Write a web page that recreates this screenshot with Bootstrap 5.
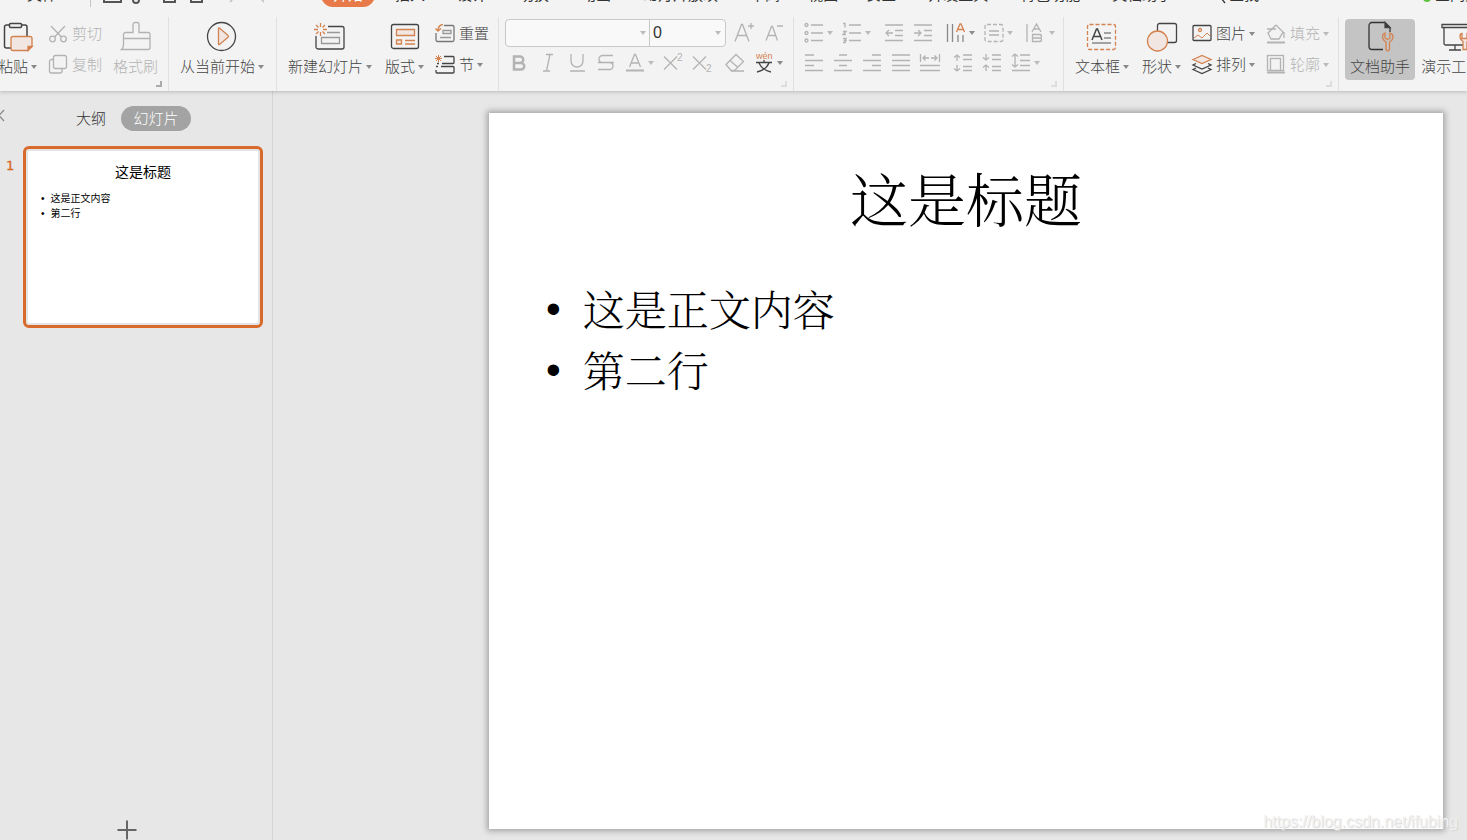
<!DOCTYPE html>
<html lang="zh-CN">
<head>
<meta charset="utf-8">
<meta name="viewport" content="width=device-width, initial-scale=1">
<title>演示文稿</title>
<link rel="stylesheet" href="https://cdn.jsdelivr.net/npm/bootstrap@5.3.0/dist/css/bootstrap.min.css">
<style>
  :root { --ink:#444; --dim:#b3b3b3; --accent:#d4824f; --tint:#f1e6e1; --ui:"Liberation Sans","Noto Sans CJK SC",sans-serif; }
  body { background:#e7e7e7; color:var(--ink); font:300 15px/20px var(--ui); overflow:hidden; }
  svg { fill:none; stroke:currentColor; stroke-width:1.3; flex:none; display:block; overflow:visible; }
  svg text { fill:currentColor; stroke:none; font-family:"Liberation Sans",sans-serif; }
  svg .or { stroke:var(--accent); }
  svg .tint { fill:var(--tint); }
  svg text.or { fill:var(--accent); stroke:none; }
  .top { background:#f3f3f3; box-shadow:0 1px 4px rgba(0,0,0,.2); position:relative; z-index:2; }

  .strip { height:7px; align-items:flex-end; overflow:hidden; }
  .strip .btn { --bs-btn-color:#333; --bs-btn-border-width:0; border:0; padding:0; font-size:15px; line-height:24px; flex:none; white-space:nowrap; }
  .strip .file { margin-left:27px; padding-right:33px; border-right:1px solid #c4c4c4; border-radius:0; }
  .quick { width:220px; margin-left:11px; flex:none; }
  .strip .pick { background:#e87a49; color:#fff; border-radius:12px; padding:0 12px; margin:0 -12px; }
  .tabs { gap:32px; margin-left:11px; flex:none; }
  .tabs .late { margin-left:-4px; }
  .sync { margin-left:auto; padding-right:0; width:44px; }

  .ribbon { height:84px; padding-top:10px; margin-left:-2px; overflow:hidden; }
  .grp { height:74px; border-right:1px solid #e0e0e0; position:relative; flex:none; gap:11px; padding:0 9px 0 11px; }
  .grp.show-grp { width:108px; }
  .grp.wide { gap:13px; }
  .grp.wide .pair { margin-left:-2px; }
  .grp.last { border:0; padding:0 6px; gap:1px; }
  .grp .btn { --bs-btn-disabled-opacity:1; --bs-btn-color:var(--ink); border:0; padding:0; font-size:15px; font-weight:300; line-height:20px; white-space:nowrap; border-radius:4px; }
  .grp .btn:disabled { color:var(--dim); }
  .grp.first { padding-left:0; padding-right:0; gap:11px; width:171px; }
  .big { display:flex; flex-direction:column; align-items:center; margin-top:2px; height:61px; }
  .grp .big { padding-top:2px; }
  .big svg { margin-bottom:4px; }
  .grp.last .btn { padding-left:5px; padding-right:5px; }
  .grp.last .on { background:#c4c4c4; }
  .pair { display:flex; flex-direction:column; align-items:flex-start; gap:11px; padding-top:7px; }
  .pair .btn, .tool .btn { display:flex; align-items:center; }
  .pair svg { margin-right:4px; }
  .drop::after { content:""; display:inline-block; border:3px solid transparent; border-top:4px solid #8a8a8a; border-bottom:0; margin-left:3px; vertical-align:3px; }
  .drop:disabled::after, :disabled .drop::after { border-top-color:#bbb; }
  .corner { position:absolute; right:6px; bottom:4px; width:6px; height:6px; border:solid #ddd; border-width:0 2px 2px 0; }
  .corner.dark { border-color:#aaa; }
  .tool { display:flex; gap:9px; align-items:center; height:20px; }
  .tool.high { height:28px; }
  .stack { padding-top:6px; display:flex; flex-direction:column; gap:10px; }
  .field { border:1px solid #c8c8c8; border-radius:4px; background:#f9f9f9; height:28px; display:flex; align-items:center; width:221px; overflow:hidden; }
  .field input { border:0; background:transparent; font-size:16px; color:#333; padding:0 3px; outline:0; height:26px; min-width:0; }
  .field .fam { width:131px; }
  .field .size { width:63px; border-left:1px solid #c8c8c8; }
  .field .drop { width:12px; }
  .grp.font-grp { width:295px; padding:0 6px; }
  .font-grp .stack { padding-top:2px; gap:6px; }
  .font-grp .tool.low { padding-left:4px; }
  .grp.para { width:270px; padding:0 10px; }

  .pane { width:273px; border-right:1px solid #d5d5d5; flex:none; padding-top:14px; position:relative; }
  .pane-tabs { height:26px; padding-left:76px; margin-bottom:15px; gap:15px; align-items:center; }
  .pane .btn { border:0; padding:0; font-size:15px; font-weight:300; line-height:25px; color:#333; }
  .pane .now { background:#a3a3a3; color:#fff; border-radius:13px; width:70px; }
  .pane .hide-pane { position:absolute; left:-2px; top:12px; }
  .no { width:23px; padding:10px 0 0 6px; color:#d8681f; font:400 13px/20px "DejaVu Sans",sans-serif; -webkit-text-stroke:.3px; }
  .thumb { width:240px; border:3px solid #d86b2b; border-radius:6px; background:#fff; box-shadow:inset 0 0 0 2px #e4e4e4; aspect-ratio:240/182; color:#000; font-weight:400; }
  .thumb h2 { font-size:14px; line-height:20px; margin:13px 0 9px; text-align:center; font-weight:400; }
  .thumb ul { list-style:none; margin:0; padding:0 0 0 15px; font-size:10px; line-height:15px; }
  .thumb li { display:flex; gap:6px; }
  .pane .plus { margin:auto 0 0 117px; align-self:flex-start; }
  .stage { flex:1; min-width:0; padding:22px 24px 10px 216px; }
  .slide { background:#fff; box-shadow:0 0 6px 2px rgba(0,0,0,.3); aspect-ratio:4/3; color:#000; font-family:"Noto Serif CJK SC","Noto Sans CJK SC",serif; font-weight:300; }
  .slide h1 { font-size:58px; line-height:70px; font-weight:300; margin:0; padding-top:49px; text-align:center; }
  .slide ul { list-style:none; margin:46px 0 0; padding:0 0 0 57px; font-size:42px; line-height:61px; }
  .slide li { display:flex; gap:22px; }
  .slide li::before, .thumb li::before { content:"•"; font-family:"Liberation Sans",sans-serif; }
  .stamp { position:absolute; right:9px; bottom:8px; font-size:16px; font-weight:400; color:#f1f1f1; text-shadow:1px 1px 1px #d6d6d6; text-decoration:none; z-index:3; }
</style>
</head>
<body class="vh-100 d-flex flex-column position-relative">
<header class="top">
  <nav class="strip d-flex" aria-label="菜单">
    <button class="btn file">文件</button>
    <svg class="quick" width="220" height="24" viewBox="0 0 220 24">
      <path d="M2 8v11h17V8M31 17a2 2 0 0 0 6 0M62 8v11h11V8M89 8v11h11V8" stroke="#555" stroke-width="2"/>
      <path d="M128 19l4-4M158 15l4 4" stroke="#bbb"/>
    </svg>
    <div class="tabs d-flex">
      <button class="btn pick">开始</button>
      <button class="btn">插入</button><button class="btn">设计</button><button class="btn">切换</button><button class="btn">动画</button><button class="btn">幻灯片放映</button><button class="btn">审阅</button><button class="btn late">视图</button><button class="btn late">安全</button><button class="btn">开发工具</button><button class="btn">特色功能</button><button class="btn">文档助手</button>
      <button class="btn d-flex align-items-center ms-2"><svg width="17" height="24" viewBox="0 0 17 24"><circle cx="6" cy="11" r="5"/><path d="M9 15l4 5"/></svg>查找</button>
    </div>
    <button class="btn sync d-flex"><svg width="12" height="24" viewBox="0 0 12 24"><circle cx="4" cy="15" r="4" fill="#5cc13c" stroke="none"/></svg>全同步</button>
  </nav>

  <div class="ribbon d-flex">
    <section class="grp first d-flex">
      <button class="btn big"><svg width="32" height="32" viewBox="0 0 32 32"><path d="M8 4H4.500a2 2 0 0 0-2 2v19a2 2 0 0 0 2 2H9M19 4h4a2 2 0 0 1 2 2v9" stroke-width="1.500"/><rect x="7.500" y="2.500" width="12" height="4" rx="1" stroke-width="1.500"/><path class="or tint" d="M11 15.500h17a2 2 0 0 1 2 2v8l-4 4H11a2 2 0 0 1-2-2v-10a2 2 0 0 1 2-2z"/><path d="M30 25.500l-4 4v-4z" class="or" fill="#d4824f"/></svg><span class="drop">粘贴</span></button>
      <div class="pair">
        <button class="btn" disabled><svg width="20" height="20" viewBox="0 0 20 20"><circle cx="4.500" cy="15" r="2.800"/><circle cx="15.500" cy="15" r="2.800"/><path d="M3 2l10.500 11M17 2L6.500 13"/></svg>剪切</button>
        <button class="btn" disabled><svg width="20" height="20" viewBox="0 0 20 20"><rect x="5.500" y=".5" width="13" height="13" rx="2"/><path d="M5 4.500H3.500a2 2 0 0 0-2 2V16a2 2 0 0 0 2 2H12a2 2 0 0 0 2-2v-2"/></svg>复制</button>
      </div>
      <button class="btn big" disabled><svg width="32" height="32" viewBox="0 0 32 32"><path d="M13 11.500V3.500a2 2 0 0 1 2-2h2a2 2 0 0 1 2 2v8h9a2 2 0 0 1 2 2v13a2 2 0 0 1-2 2H1.500Q3.500 27 3.500 24V13.500a2 2 0 0 1 2-2zM3.500 17.500H30"/></svg>格式刷</button>
      <i class="corner dark"></i>
    </section>

    <section class="grp show-grp d-flex">
      <button class="btn big"><svg width="32" height="32" viewBox="0 0 32 32"><circle cx="15.500" cy="15.500" r="14"/><path class="or tint" d="M12.500 7.500V23q0 1 1 .5l8.500-7.300q1-1 0-1.800L13.500 7q-1-.5-1 .5z"/></svg><span class="drop">从当前开始</span></button>
    </section>

    <section class="grp wide d-flex">
      <button class="btn big"><svg width="32" height="32" viewBox="0 0 32 32"><path d="M14 5.500h14a2 2 0 0 1 2 2V26a2 2 0 0 1-2 2H4a2 2 0 0 1-2-2V15"/><path d="M13 11.500h13M7.500 16.500h18v6h-18z" stroke="#999"/><path class="or" d="M6.500 2v4M6.500 11v4M0 8.500h4M9 8.500h4M2 4l2.500 2.500M8.500 10.500L11 13M11 4L8.500 6.500M4.500 10.500L2 13"/></svg><span class="drop">新建幻灯片</span></button>
      <button class="btn big"><svg width="32" height="32" viewBox="0 0 32 32"><rect x="2.500" y="3.500" width="27" height="24" rx="2"/><path class="or tint" d="M7.500 8.500h18v6h-18zM7.500 19h5v4h-5z"/><path class="or" d="M16 19.500h10M16 23h10"/></svg><span class="drop">版式</span></button>
      <div class="pair">
        <button class="btn"><svg width="20" height="20" viewBox="0 0 20 20"><path d="M9 1.500h8.500a1.500 1.500 0 0 1 1.500 1.500v13a1.500 1.500 0 0 1-1.500 1.500h-15A1.500 1.500 0 0 1 1 16V9" stroke="#777"/><path d="M8 6.500h8v3H8zM5 13.500h11" stroke="#999"/><path class="or" d="M8 .5Q3 1 3 7M.5 4.500L3 7l3-2.500"/></svg>重置</button>
        <button class="btn"><svg width="20" height="20" viewBox="0 0 20 20"><path d="M9 1.500h9q1 0 1 1v5q0 1-1 1H7M2 8.500h2M1 11.500h2M6 11.500h12q1 0 1 1V17q0 1-1 1H2q-1 0-1-1v-2"/><path class="or" d="M3.500 0v7M0 3.500h7M1 1l5 5M6 1L1 6" stroke-width="1"/></svg><span class="drop">节</span></button>
      </div>
    </section>

    <section class="grp font-grp d-flex">
      <div class="stack">
        <div class="tool high">
          <div class="field"><input class="fam" aria-label="字体"><button class="btn drop" disabled aria-label="字体列表"></button><input class="size" value="0" aria-label="字号"><button class="btn drop" disabled aria-label="字号列表"></button></div>
          <button class="btn" disabled aria-label="增大字号"><svg width="20" height="20" viewBox="0 0 20 20"><path d="M0 18.500L6.500 1.500h1L14 18.500M2.500 12.500h9M13 3h6M16 0v6"/></svg></button>
          <button class="btn" disabled aria-label="减小字号"><svg width="20" height="20" viewBox="0 0 20 20"><path d="M2 17.500L7.500 3.500h1L13.500 17.500M4 12.500h8M13 3h6"/></svg></button>
        </div>
        <div class="tool low">
          <button class="btn" disabled aria-label="加粗"><svg width="20" height="20" viewBox="0 0 20 20"><path d="M5 3.500h6a3 3 0 0 1 0 6.500H5zM5 10h7a3 3 0 0 1 0 6.500H5z" stroke-width="2.500"/></svg></button>
          <button class="btn" disabled aria-label="倾斜"><svg width="20" height="20" viewBox="0 0 20 20"><path d="M8 1.500h7M5 18h7M12 1.500L8.500 18"/></svg></button>
          <button class="btn" disabled aria-label="下划线"><svg width="20" height="20" viewBox="0 0 20 20"><path d="M4 1v7a6 6 0 0 0 12 0V1M3 18h15"/></svg></button>
          <button class="btn" disabled aria-label="删除线"><svg width="20" height="20" viewBox="0 0 20 20"><path d="M17 2.500H7q-4 0-4 3.500t4 3.500h6q4 0 4 3.500t-4 3.500H2M2 9.500h16"/></svg></button>
          <button class="btn drop" disabled aria-label="字体颜色"><svg width="20" height="20" viewBox="0 0 20 20"><path d="M4.500 14L9.500 1.500h1L15.500 14M6.500 10h7"/><path d="M1 17.500h18" stroke-width="2"/></svg></button>
          <button class="btn" disabled aria-label="上标"><svg width="20" height="20" viewBox="0 0 20 20"><path d="M1 3.500l13 13M14 3.500l-13 13"/><text x="14" y="8" font-size="10">2</text></svg></button>
          <button class="btn" disabled aria-label="下标"><svg width="20" height="20" viewBox="0 0 20 20"><path d="M1 3.500l13 13M14 3.500l-13 13"/><text x="14" y="19" font-size="10">2</text></svg></button>
          <button class="btn ms-1" disabled aria-label="清除格式"><svg width="20" height="20" viewBox="0 0 20 20"><path d="M1 11.500L11 1.500l7.500 7L9.500 17.500H6zM5 7.500l8 7M6 18h13"/></svg></button>
          <button class="btn drop" aria-label="拼音"><svg width="20" height="20" viewBox="0 0 20 20"><text class="or" x="2" y="6" font-size="9">wén</text><path d="M2 9.500h16M10 7v2.500M5 10q3 7 12 9M15 10q-3 7-12 9"/></svg></button>
        </div>
      </div>
      <i class="corner"></i>
    </section>

    <section class="grp para d-flex">
      <div class="stack">
        <div class="tool">
          <button class="btn drop" disabled aria-label="项目符号"><svg width="20" height="20" viewBox="0 0 20 20"><path d="M7 2h12M7 10h12M7 17.500h12"/><circle cx="2.500" cy="2" r="1.500"/><circle cx="2.500" cy="10" r="1.500"/><circle cx="2.500" cy="17.500" r="1.500"/></svg></button>
          <button class="btn drop" disabled aria-label="编号"><svg width="20" height="20" viewBox="0 0 20 20"><path d="M7 2h12M7 10h12M7 17.500h12M1 .5h2v4M1 8.500h3L1 11.500h3M1 15.500h3l-1.500 2H4l-1 2H1" /></svg></button>
          <button class="btn ms-1" disabled aria-label="减少缩进"><svg width="20" height="20" viewBox="0 0 20 20"><path d="M1 2h18M11 7.500h8M11 12.500h8M1 17.500h18"/><path d="M9 10H2M5 7l-3 3 3 3"/></svg></button>
          <button class="btn" disabled aria-label="增加缩进"><svg width="20" height="20" viewBox="0 0 20 20"><path d="M1 2h18M11 7.500h8M11 12.500h8M1 17.500h18"/><path d="M1 10h7M5 7l3 3-3 3"/></svg></button>
          <button class="btn drop ms-1" aria-label="文字方向"><svg width="20" height="20" viewBox="0 0 20 20"><path d="M1.500 1v18M6.500 1v18M12 12v7M17 12v7" stroke="#888"/><path class="or" d="M10.500 9L14 1h1l3.500 8M12 6.500h5"/></svg></button>
          <button class="btn drop" disabled aria-label="对齐文本"><svg width="20" height="20" viewBox="0 0 20 20"><rect x="1" y="1.500" width="18" height="17" rx="2" stroke-dasharray="4 2"/><path d="M5 8h10M5 12h10"/></svg></button>
          <button class="btn drop ms-1" disabled aria-label="文字排列"><svg width="20" height="20" viewBox="0 0 20 20"><path d="M1 1v18M6 9L10.500 1 15 9M7.500 6h6M6.500 11.500h7q3 0 1.500 3.500 1.500 3.500-1.500 3.500h-7zM6.500 15h8"/></svg></button>
        </div>
        <div class="tool">
          <button class="btn" disabled aria-label="左对齐"><svg width="20" height="20" viewBox="0 0 20 20"><path d="M1 2h9M1 7.500h18M1 12.500h9M1 17.500h18"/></svg></button>
          <button class="btn" disabled aria-label="居中"><svg width="20" height="20" viewBox="0 0 20 20"><path d="M6 2h8M1 7.500h18M6 12.500h8M1 17.500h18"/></svg></button>
          <button class="btn" disabled aria-label="右对齐"><svg width="20" height="20" viewBox="0 0 20 20"><path d="M10 2h9M1 7.500h18M10 12.500h9M1 17.500h18"/></svg></button>
          <button class="btn" disabled aria-label="两端对齐"><svg width="20" height="20" viewBox="0 0 20 20"><path d="M1 2h18M1 7.500h18M1 12.500h18M1 17.500h18"/></svg></button>
          <button class="btn" disabled aria-label="分散对齐"><svg width="20" height="20" viewBox="0 0 20 20"><path d="M.5 1v8M19.500 1v8M0 12.500h20M0 17.500h20"/><path d="M9 5H3M5.500 2.500L3 5l2.500 2.500M11 5h6M14.500 2.500L17 5l-2.500 2.500"/></svg></button>
          <button class="btn ms-1" disabled aria-label="增大段落间距"><svg width="20" height="20" viewBox="0 0 20 20"><path d="M10 2h9M10 6.500h9M10 13.500h9M10 17.500h9"/><path d="M4 8V2M1 4.500L4 2l3 2.500M4 12v6M1 15.500L4 18l3-2.500"/></svg></button>
          <button class="btn" disabled aria-label="减小段落间距"><svg width="20" height="20" viewBox="0 0 20 20"><path d="M10 2h9M10 6.500h9M10 13.500h9M10 17.500h9"/><path d="M4 1v6M1 4.500L4 7l3-2.500M4 18v-6M1 14.500L4 12l3 2.500"/></svg></button>
          <button class="btn drop" disabled aria-label="行距"><svg width="20" height="20" viewBox="0 0 20 20"><path d="M9 2h10M9 7.500h10M9 12.500h10M1 17.500h18"/><path d="M4 1v13M1 3.500L4 1l3 2.500M1 11.500L4 14l3-2.500"/></svg></button>
        </div>
      </div>
      <i class="corner"></i>
    </section>

    <section class="grp wide d-flex">
      <button class="btn big"><svg width="32" height="32" viewBox="0 0 32 32"><rect class="or" x="1.500" y="3.500" width="28" height="25" rx="2" stroke-dasharray="4 2"/><path d="M6 19L10.500 8h1L16 19M8 15.500h6" stroke-width="1.500"/><path d="M18 12h7M18 17h7M6 22h19" stroke="#888"/></svg><span class="drop">文本框</span></button>
      <button class="btn big"><svg width="32" height="32" viewBox="0 0 32 32"><rect x="11.500" y="2.500" width="19" height="19" rx="2"/><circle class="or tint" cx="11.500" cy="20" r="10"/></svg><span class="drop">形状</span></button>
      <div class="pair">
        <button class="btn"><svg width="20" height="20" viewBox="0 0 20 20"><rect x="1" y="1.500" width="18" height="15" rx="1"/><circle class="or" cx="8" cy="6" r="1.500"/><path class="or" d="M2 14l4-3 4 3 5-5 3 3" stroke-width="1"/></svg><span class="drop">图片</span></button>
        <button class="btn"><svg width="20" height="20" viewBox="0 0 20 20"><path d="M4 8.500L1 10l9 4 9-4-3-1.500M4 13l-3 1.500 9 4 9-4L16 13"/><path class="or tint" d="M1 4.500l9-4 9 4-9 4z"/></svg><span class="drop">排列</span></button>
      </div>
      <div class="pair">
        <button class="btn" disabled><svg width="20" height="20" viewBox="0 0 20 20"><path d="M1 5h9M10 1l7 7-4 7H5L2 9l8-8M18 8v6"/><path d="M1 18.500h18" stroke-width="2"/></svg><span class="drop">填充</span></button>
        <button class="btn" disabled><svg width="20" height="20" viewBox="0 0 20 20"><rect x="1.500" y=".5" width="16" height="15"/><rect x="4.500" y="3.500" width="10" height="12"/><path d="M1 17.500h18" stroke-width="2"/></svg><span class="drop">轮廓</span></button>
      </div>
      <i class="corner"></i>
    </section>

    <section class="grp last d-flex">
      <button class="btn big on"><svg width="32" height="32" viewBox="0 0 32 32"><path d="M19 28.500H8a3 3 0 0 1-3-3V4.500a3 3 0 0 1 3-3h13l5 5V11" stroke="#333"/><path d="M21 1.500v5h5z" fill="#333"/><path class="or" d="M22 28.500v-7.500q-3.500-2-3.500-5.500 0-2.500 2.500-3.500v5l2.500 1.500 2.500-1.500v-5q3 1 3 3.500 0 3.500-3.500 5.500v7.500q-1.500 2.500-3.500 0z"/></svg>文档助手</button>
      <button class="btn big"><svg width="32" height="32" viewBox="0 0 32 32"><path d="M7 3.500h32v3H7zM9 7v15.500q0 1.500 1.500 1.500H39M20 24v5M14 29h12"/><path class="or tint" d="M28 28.500v-8q-3-2-3-5t2-3v5h5v-5q3 0 3 3t-3 5v8z"/></svg>演示工具</button>
    </section>
  </div>
</header>

<div class="d-flex flex-grow-1">
  <aside class="pane d-flex flex-column">
    <button class="btn hide-pane" aria-label="收起"><svg width="8" height="25" viewBox="0 0 8 25"><path d="M6 7L1 12.500 6 18" stroke="#888"/></svg></button>
    <div class="pane-tabs d-flex"><button class="btn">大纲</button><button class="btn now">幻灯片</button></div>
    <div class="d-flex">
      <span class="no">1</span>
      <div class="thumb"><h2>这是标题</h2><ul><li>这是正文内容</li><li>第二行</li></ul></div>
    </div>
    <button class="btn plus" aria-label="新建幻灯片"><svg width="20" height="20" viewBox="0 0 20 20"><path d="M10 .5v19M.5 10h19" stroke="#666" stroke-width="2"/></svg></button>
  </aside>
  <main class="stage">
    <article class="slide"><h1>这是标题</h1><ul><li>这是正文内容</li><li>第二行</li></ul></article>
  </main>
</div>
<a class="stamp" href="https://blog.csdn.net/ifubing">https://blog.csdn.net/ifubing</a>
<script src="https://cdn.jsdelivr.net/npm/bootstrap@5.3.0/dist/js/bootstrap.bundle.min.js"></script>
</body>
</html>
